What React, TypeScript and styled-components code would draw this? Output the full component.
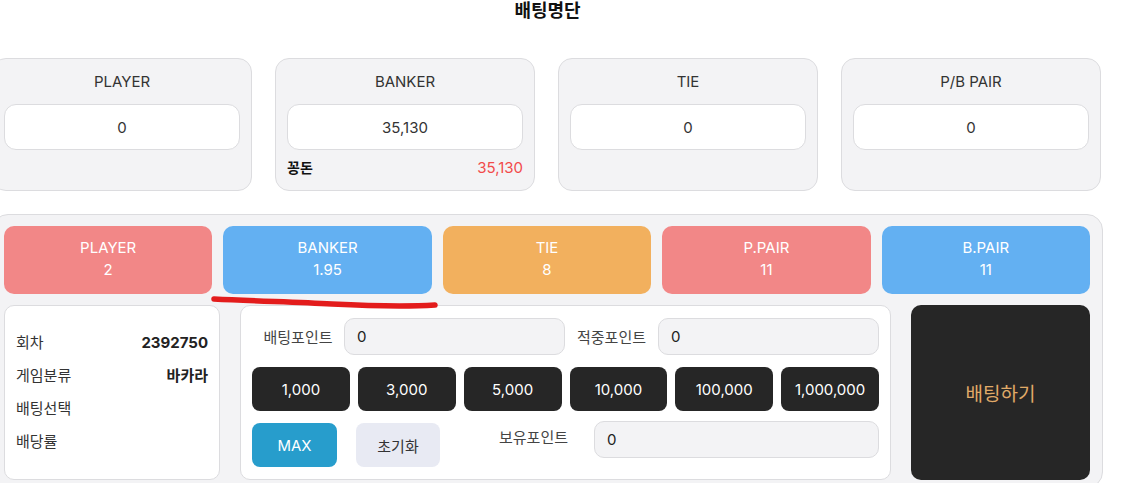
import React from 'react'
import styled, { createGlobalStyle } from 'styled-components'

const GlobalStyle = createGlobalStyle`
  html, body {
    margin: 0;
    padding: 0;
    background: #fff;
    overflow: hidden;
  }
  body {
    font-family: Inter, "Noto Sans CJK KR", sans-serif;
    color: #333;
  }
  * { box-sizing: border-box; }
`

const Page = styled.div`
  position: relative;
  width: 1111px;
  margin-left: -8px;
`

const Title = styled.h2`
  margin: 0;
  height: 58px;
  line-height: 22px;
  text-align: center;
  font-size: 18px;
  font-weight: 700;
  color: #111;
`

const SummaryGrid = styled.div`
  display: grid;
  grid-template-columns: repeat(4, 260px);
  gap: 23px;
`

const SummaryCard = styled.div`
  height: 133px;
  background: #f3f3f5;
  border: 1px solid #dcdcdf;
  border-radius: 14px;
  padding: 13px 11px 0;
`

const SummaryLabel = styled.div`
  text-align: center;
  font-size: 15px;
  line-height: 20px;
  color: #333;
`

const SummaryValue = styled.div`
  margin-top: 12px;
  height: 46px;
  background: #fff;
  border: 1px solid #dcdcdf;
  border-radius: 12px;
  display: flex;
  align-items: center;
  justify-content: center;
  font-size: 15px;
  color: #333;
`

const ExtraRow = styled.div`
  display: flex;
  justify-content: space-between;
  align-items: center;
  margin-top: 8px;
  line-height: 20px;
`

const ExtraLabel = styled.span`
  font-size: 14px;
  font-weight: 700;
  color: #111;
`

const ExtraValue = styled.span`
  font-size: 15px;
  color: #f24b4b;
`

const BetPanel = styled.div`
  margin-top: 23px;
  background: #f3f3f5;
  border: 1px solid #dcdcdf;
  border-radius: 16px;
  padding: 11px 12px 8px 11px;
`

const OddsGrid = styled.div`
  display: grid;
  grid-template-columns: repeat(5, 1fr);
  gap: 11px;
`

const OddsButton = styled.div<{ $bg: string }>`
  height: 68px;
  border-radius: 10px;
  background: ${p => p.$bg};
  color: #fff;
  padding-top: 11px;
  text-align: center;
  font-size: 15px;
  line-height: 22px;
`

const LowerRow = styled.div`
  margin-top: 11px;
  display: grid;
  grid-template-columns: 216px 651px 179px;
  gap: 20px;
  height: 174px;
`

const InfoCard = styled.div`
  background: #fff;
  border: 1px solid #dcdcdf;
  border-radius: 10px;
  padding: 0 11px;
  display: flex;
  flex-direction: column;
  justify-content: center;
  gap: 11px;
`

const InfoRow = styled.div`
  display: flex;
  justify-content: space-between;
  line-height: 22px;
  font-size: 15px;
  color: #333;
`

const InfoValue = styled.span`
  font-weight: 700;
  color: #222;
`

const ControlCard = styled.div`
  background: #fff;
  border: 1px solid #dcdcdf;
  border-radius: 10px;
  padding: 12px 11px;
  display: flex;
  flex-direction: column;
  gap: 12px;
`

const PointRow = styled.div`
  display: grid;
  grid-template-columns: 92px 1fr 93px 1fr;
  align-items: center;
`

const FieldLabel = styled.span`
  text-align: center;
  font-size: 15px;
  color: #444;
`

const Field = styled.div<{ $width?: number }>`
  height: 37px;
  background: #f3f3f5;
  border: 1px solid #dcdcdf;
  border-radius: 10px;
  padding: 0 12px;
  display: flex;
  align-items: center;
  font-size: 15px;
  color: #222;
  ${p => (p.$width ? `width: ${p.$width}px;` : '')}
`

const ChipGrid = styled.div`
  display: grid;
  grid-template-columns: repeat(6, 1fr);
  gap: 8px;
`

const Chip = styled.button`
  height: 44px;
  border: none;
  border-radius: 8px;
  background: #262626;
  color: #fff;
  font-family: inherit;
  font-size: 15px;
`

const ActionRow = styled.div`
  display: flex;
  align-items: flex-start;
  margin-top: -2px;
`

const ActionButton = styled.button<{ $primary?: boolean }>`
  width: ${p => (p.$primary ? 85 : 84)}px;
  height: 44px;
  margin-top: 2px;
  margin-right: ${p => (p.$primary ? 19 : 0)}px;
  border: none;
  border-radius: 8px;
  background: ${p => (p.$primary ? '#279dcc' : '#e8eaf3')};
  color: ${p => (p.$primary ? '#fff' : '#333')};
  font-family: inherit;
  font-size: 15px;
`

const HoldLabel = styled.span`
  flex: 1;
  text-align: right;
  padding-right: 26px;
  line-height: 34px;
  font-size: 15px;
  color: #444;
`

const SubmitButton = styled.button`
  border: none;
  border-radius: 10px;
  background: #262626;
  color: #e0aa68;
  font-family: inherit;
  font-size: 19px;
`

const Scribble = styled.svg`
  position: absolute;
  left: 0;
  top: 0;
  pointer-events: none;
`

const summaries = [
  { label: 'PLAYER', value: '0' },
  { label: 'BANKER', value: '35,130', extra: '35,130' },
  { label: 'TIE', value: '0' },
  { label: 'P/B PAIR', value: '0' },
]

const odds = [
  { label: 'PLAYER', value: '2', bg: '#f28787' },
  { label: 'BANKER', value: '1.95', bg: '#63b0f2' },
  { label: 'TIE', value: '8', bg: '#f2b05e' },
  { label: 'P.PAIR', value: '11', bg: '#f28787' },
  { label: 'B.PAIR', value: '11', bg: '#63b0f2' },
]

const chips = ['1,000', '3,000', '5,000', '10,000', '100,000', '1,000,000']

export default function App() {
  return (
    <>
      <GlobalStyle />
      <Page>
        <Title>배팅명단</Title>
        <SummaryGrid>
          {summaries.map(s => (
            <SummaryCard key={s.label}>
              <SummaryLabel>{s.label}</SummaryLabel>
              <SummaryValue>{s.value}</SummaryValue>
              {s.extra && (
                <ExtraRow>
                  <ExtraLabel>꽁돈</ExtraLabel>
                  <ExtraValue>{s.extra}</ExtraValue>
                </ExtraRow>
              )}
            </SummaryCard>
          ))}
        </SummaryGrid>

        <BetPanel>
          <OddsGrid>
            {odds.map(o => (
              <OddsButton key={o.label} $bg={o.bg}>
                <div>{o.label}</div>
                <div>{o.value}</div>
              </OddsButton>
            ))}
          </OddsGrid>

          <LowerRow>
            <InfoCard>
              <InfoRow>
                <span>회차</span>
                <InfoValue>2392750</InfoValue>
              </InfoRow>
              <InfoRow>
                <span>게임분류</span>
                <InfoValue>바카라</InfoValue>
              </InfoRow>
              <InfoRow>
                <span>배팅선택</span>
              </InfoRow>
              <InfoRow>
                <span>배당률</span>
              </InfoRow>
            </InfoCard>

            <ControlCard>
              <PointRow>
                <FieldLabel>배팅포인트</FieldLabel>
                <Field>0</Field>
                <FieldLabel>적중포인트</FieldLabel>
                <Field>0</Field>
              </PointRow>
              <ChipGrid>
                {chips.map(c => (
                  <Chip key={c}>{c}</Chip>
                ))}
              </ChipGrid>
              <ActionRow>
                <ActionButton $primary>MAX</ActionButton>
                <ActionButton>초기화</ActionButton>
                <HoldLabel>보유포인트</HoldLabel>
                <Field $width={285}>0</Field>
              </ActionRow>
            </ControlCard>

            <SubmitButton>배팅하기</SubmitButton>
          </LowerRow>
        </BetPanel>

        <Scribble width={1111} height={483}>
          <path
            d="M222 299 C 260 301, 300 302, 340 304 S 410 307, 443 305"
            stroke="#e31c1c"
            strokeWidth={5.5}
            strokeLinecap="round"
            fill="none"
          />
        </Scribble>
      </Page>
    </>
  )
}
